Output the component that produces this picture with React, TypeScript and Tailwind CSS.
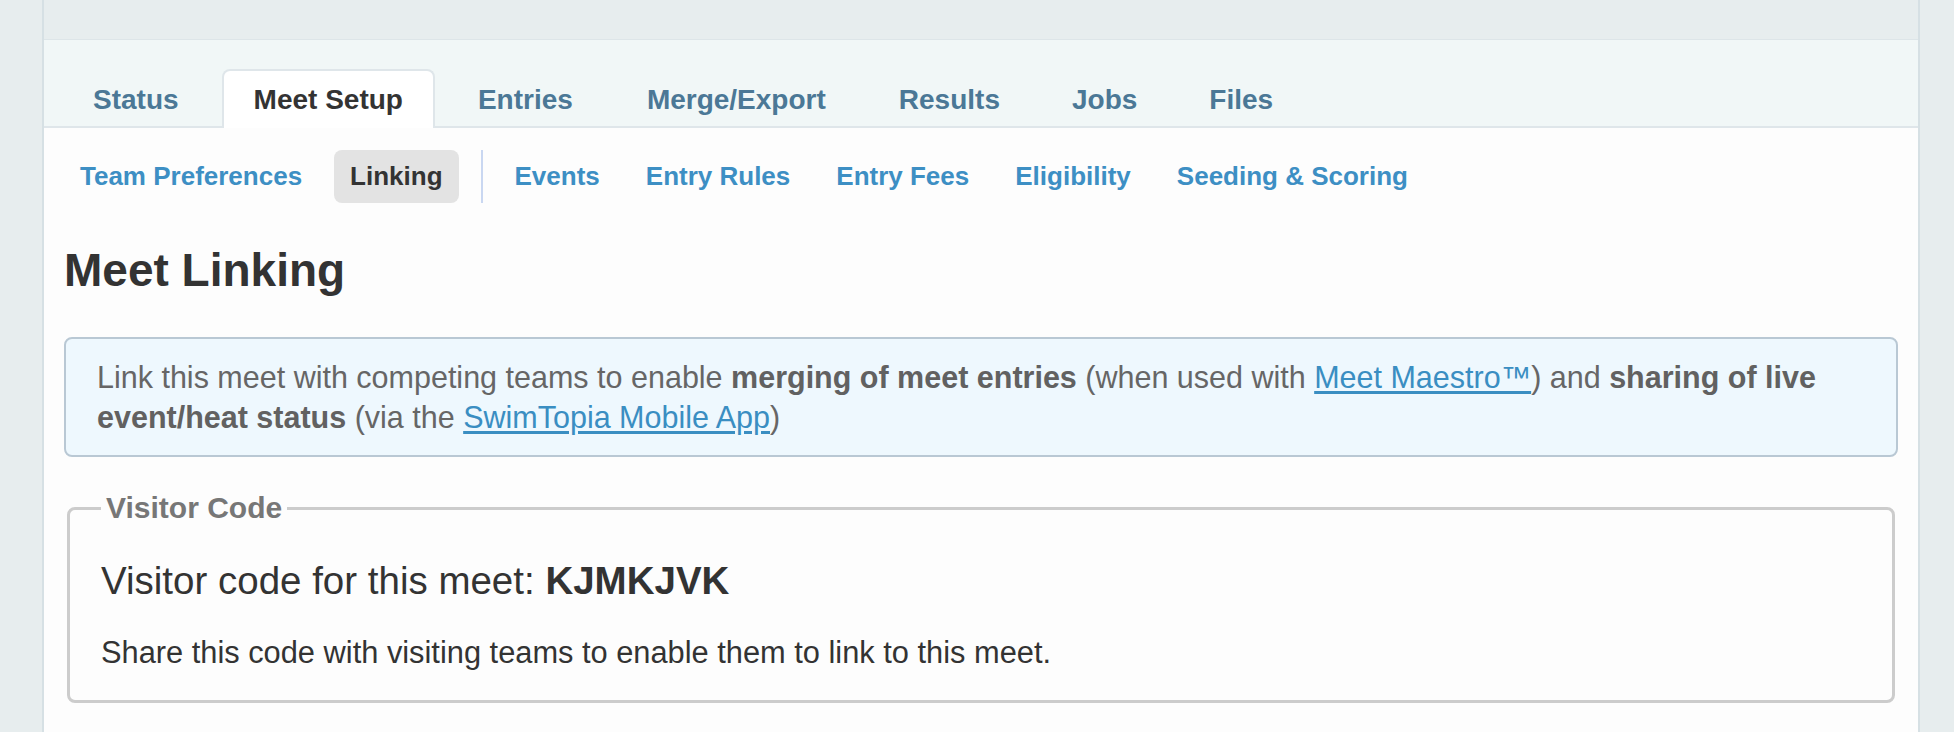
import React from "react";

const tabs = ["Status", "Meet Setup", "Entries", "Merge/Export", "Results", "Jobs", "Files"];
const subLeft = ["Team Preferences", "Linking"];
const subRight = ["Events", "Entry Rules", "Entry Fees", "Eligibility", "Seeding & Scoring"];

export default function App() {
  return (
    <div
      className="flex h-[732px] w-[1954px] overflow-hidden bg-[#e7edee]"
      style={{ fontFamily: '"Liberation Sans", Arial, Helvetica, sans-serif' }}
    >
      <div className="w-[42px] shrink-0 bg-[#e7edee]" />
      <div className="flex w-[1878px] shrink-0 flex-col border-x-2 border-[#d6e0e4] bg-[#fdfdfd]">
        <div className="h-[40px] shrink-0 border-b border-[#dde5e8] bg-[#e7edee]" />
        <div className="flex h-[88px] shrink-0 items-end gap-[12px] border-b-2 border-[#dfe6ea] bg-[#f1f7f7] pl-[18px]">
          {tabs.map((t) => {
            const active = t === "Meet Setup";
            const tight = t === "Results" || t === "Jobs" || t === "Files";
            return (
              <div
                key={t}
                className={
                  active
                    ? "mb-[-2px] flex h-[59px] items-center rounded-t-[8px] border-2 border-b-0 border-[#dfe6ea] bg-white px-[30px] text-[28px] font-bold text-[#333333]"
                    : tight
                    ? "mb-[-2px] flex h-[59px] items-center border-2 border-b-0 border-transparent px-[28px] text-[28px] font-bold text-[#4b7896]"
                    : "mb-[-2px] flex h-[59px] items-center border-2 border-b-0 border-transparent px-[29px] text-[28px] font-bold text-[#4b7896]"
                }
              >
                {t}
              </div>
            );
          })}
        </div>
        <div className="px-5">
          <div className="flex items-center pt-[22px]">
            <div className="flex items-center gap-4">
              {subLeft.map((s) => (
                <div
                  key={s}
                  className={
                    s === "Linking"
                      ? "flex h-[53px] items-center rounded-[8px] bg-[#e3e3e3] px-4 text-[26px] font-bold text-[#333333]"
                      : "flex h-[53px] items-center rounded-[8px] px-4 text-[26px] font-bold text-[#3d8fc4]"
                  }
                >
                  {s}
                </div>
              ))}
            </div>
            <div className="ml-[22px] mr-[17px] h-[53px] w-[2px] bg-[#c9d7f1]" />
            <div className="flex items-center gap-4">
              {subRight.map((s) => (
                <div key={s} className="flex h-[53px] items-center px-[15px] text-[26px] font-bold text-[#3d8fc4]">
                  {s}
                </div>
              ))}
            </div>
          </div>
          <h1 className="mt-[41px] text-[46px] font-bold leading-[52px] text-[#333333]">Meet Linking</h1>
          <div className="mt-[41px] rounded-[8px] border-2 border-[#b9c8d4] bg-[#eef8fe] px-[31px] py-[18px] text-[30.5px] leading-[40px] text-[#666666]">
            Link this meet with competing teams to enable <b className="font-bold text-[#616161]">merging of meet entries</b> (when used with{" "}
            <a className="text-[#3a8ec2] underline underline-offset-[3px]">Meet Maestro™</a>) and{" "}
            <b className="font-bold text-[#616161]">sharing of live event/heat status</b> (via the{" "}
            <a className="text-[#3a8ec2] underline underline-offset-[3px]">SwimTopia Mobile App</a>)
          </div>
          <fieldset className="mx-[3px] mt-[33px] rounded-[8px] border-[3px] border-[#cccccc] px-[31px] pb-[25px]">
            <legend className="px-[5px] text-[30px] font-bold leading-[36px] text-[#777777]">Visitor Code</legend>
            <div className="mt-[32px] text-[38.5px] leading-[46px] text-[#333333]">
              Visitor code for this meet: <b className="font-bold">KJMKJVK</b>
            </div>
            <p className="mt-[26px] text-[30.8px] leading-[45px] text-[#333333]">
              Share this code with visiting teams to enable them to link to this meet.
            </p>
          </fieldset>
        </div>
      </div>
      <div className="flex-1 bg-[#e7edee]" />
    </div>
  );
}
